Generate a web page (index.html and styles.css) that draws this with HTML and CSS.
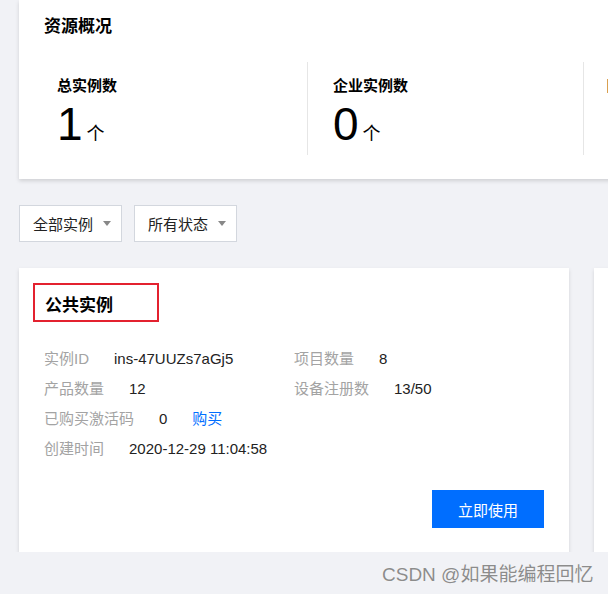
FILE: index.html
```html
<!DOCTYPE html>
<html lang="zh-CN">
<head>
    <meta charset="UTF-8">
    <meta name="viewport" content="width=device-width, initial-scale=1.0">
    <title>资源概况</title>
    <link rel="stylesheet" href="styles.css">
</head>
<body>
    <div class="page">
        <div class="overview">
            <h2 class="overview-title">资源概况</h2>
            <div class="stats">
                <div class="stat">
                    <div class="stat-label">总实例数</div>
                    <div class="stat-value"><span class="stat-num">1</span><span class="stat-unit">个</span></div>
                </div>
                <div class="stat">
                    <div class="stat-label">企业实例数</div>
                    <div class="stat-value"><span class="stat-num">0</span><span class="stat-unit">个</span></div>
                </div>
                <div class="stat">
                    <div class="stat-label"><span class="stat-mark"></span></div>
                </div>
            </div>
        </div>

        <div class="filters">
            <div class="select">全部实例<span class="caret"></span></div>
            <div class="select">所有状态<span class="caret"></span></div>
        </div>

        <div class="cards">
            <div class="card">
                <div class="card-head">
                    <h3 class="card-title">公共实例</h3>
                </div>
                <div class="info">
                    <div class="info-item"><span class="info-label">实例ID</span><span class="info-value">ins-47UUZs7aGj5</span></div>
                    <div class="info-item"><span class="info-label">项目数量</span><span class="info-value">8</span></div>
                    <div class="info-item"><span class="info-label">产品数量</span><span class="info-value">12</span></div>
                    <div class="info-item"><span class="info-label">设备注册数</span><span class="info-value">13/50</span></div>
                    <div class="info-item wide"><span class="info-label">已购买激活码</span><span class="info-value">0</span><a class="info-link" href="#">购买</a></div>
                    <div class="info-item wide"><span class="info-label">创建时间</span><span class="info-value">2020-12-29 11:04:58</span></div>
                </div>
                <div class="card-foot">
                    <button class="btn-primary">立即使用</button>
                </div>
            </div>
            <div class="card"></div>
        </div>
    </div>

    <div class="watermark">CSDN @如果能编程回忆</div>
</body>
</html>
```

FILE: styles.css
```css
body {
    font-family: 'Liberation Sans', 'Noto Sans CJK SC', sans-serif;
    margin: 0;
    background-color: #f1f2f6;
    color: #000;
    overflow: hidden;
}

.page {
    padding-left: 19px;
    width: 1200px;
}

.overview {
    background: white;
    width: 900px;
    padding: 14px 25px 24px;
    box-shadow: 0 2px 4px rgba(0,0,0,0.14);
}

.overview-title {
    margin: 0;
    font-size: 17px;
    line-height: 26px;
    font-weight: bold;
}

.stats {
    display: flex;
    margin: 22px 0 0 -13px;
    height: 93px;
}

.stat {
    width: 276px;
    padding: 13px 0 0 25px;
    border-left: 1px solid #e6e6e6;
    box-sizing: border-box;
}

.stat:first-child {
    border-left: none;
    padding-left: 26px;
}

.stat-label {
    font-size: 15px;
    line-height: 22px;
    font-weight: bold;
}

.stat-mark {
    display: inline-block;
    width: 3px;
    height: 14px;
    background: #d9a050;
    vertical-align: -2px;
    margin-left: -2px;
}

.stat-value {
    margin-top: 2px;
    line-height: 50px;
}

.stat-num {
    font-size: 46px;
}

.stat-unit {
    font-size: 18px;
    margin-left: 4px;
}

.filters {
    display: flex;
    gap: 12px;
    margin-top: 26px;
}

.select {
    width: 103px;
    height: 37px;
    box-sizing: border-box;
    border: 1px solid #d3d7de;
    background: white;
    display: flex;
    align-items: center;
    padding-left: 13px;
    font-size: 15px;
    color: #222;
}

.caret {
    margin-left: 10px;
    width: 0;
    height: 0;
    border-left: 4px solid transparent;
    border-right: 4px solid transparent;
    border-top: 5px solid #888;
}

.cards {
    display: flex;
    gap: 25px;
    margin-top: 26px;
}

.card {
    width: 550px;
    height: 284px;
    flex-shrink: 0;
    box-sizing: border-box;
    background: white;
    padding: 15px 25px 24px;
    box-shadow: 0 2px 4px rgba(0,0,0,0.13);
    display: flex;
    flex-direction: column;
}

.card-head {
    margin-left: -11px;
    width: 126px;
    height: 39px;
    box-sizing: border-box;
    border: 2px solid #e3212f;
    padding: 5px 0 0 10px;
}

.card-title {
    margin: 0;
    font-size: 17px;
    line-height: 31px;
    font-weight: bold;
}

.info {
    display: grid;
    grid-template-columns: 250px 250px;
    margin-top: 22px;
    font-size: 15px;
    line-height: 30px;
}

.info-item.wide {
    grid-column: 1 / 3;
}

.info-label {
    color: #a3a3a3;
    margin-right: 25px;
}

.info-value {
    color: #222;
}

.info-link {
    color: #006eff;
    text-decoration: none;
    margin-left: 25px;
}

.card-foot {
    margin-top: auto;
    display: flex;
    justify-content: flex-end;
}

.btn-primary {
    width: 112px;
    height: 38px;
    border: none;
    background: #006eff;
    color: white;
    font-family: inherit;
    font-size: 15px;
    padding: 0;
}

.watermark {
    position: absolute;
    left: 382px;
    top: 562px;
    font-size: 19px;
    line-height: 26px;
    color: #8c8c8c;
    white-space: nowrap;
    text-shadow: 0 0 1px #fff;
}
```
